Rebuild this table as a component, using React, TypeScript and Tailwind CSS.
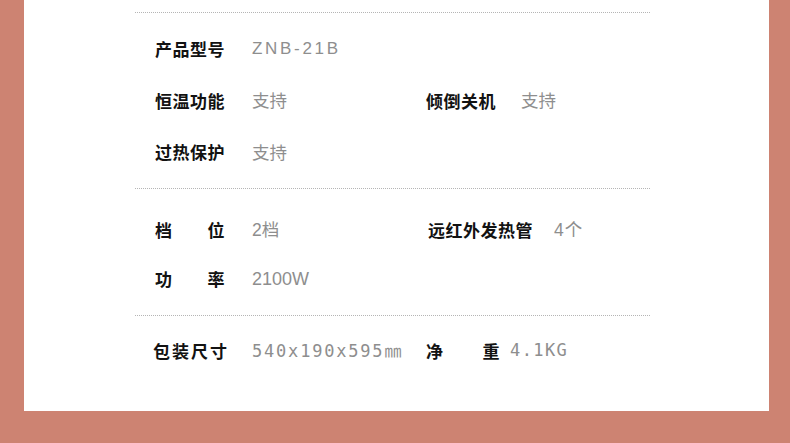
import React from "react";

const cjk = { fontFamily: '"Noto Sans CJK SC", "Noto Sans", sans-serif' };
const sans = { fontFamily: '"Liberation Sans", "Noto Sans CJK SC", sans-serif' };
const mono = { fontFamily: '"DejaVu Sans Mono", "Noto Sans CJK SC", monospace' };

function Label({ children, justify = false, w = "w-[70px]" }: { children: React.ReactNode; justify?: boolean; w?: string }) {
  return (
    <div
      className={`${w} shrink-0 text-[17px] font-bold text-[#121212] leading-none tracking-[0.5px] ${justify ? "flex justify-between" : ""}`}
      style={cjk}
    >
      {children}
    </div>
  );
}

function Line() {
  return <div className="h-0 border-t border-dotted border-[#b5b5b5]" />;
}

export default function App() {
  return (
    <div className="w-[790px] h-[443px] bg-[#cd8372] overflow-hidden">
      <div className="ml-[24px] w-[745px] h-[411px] bg-white pl-[111px]">
        <div className="w-[515px]">
          <div className="h-[12px]" />
          <Line />
          <div className="pt-[10px] pb-[11px] pl-[20px]">
            <div className="h-[51px] flex items-center">
              <div className="w-[271px] flex items-center">
                <Label w="w-[97px]">产品型号</Label>
                <span className="text-[17px] text-[#8e8e8e] tracking-[2.7px] leading-none" style={sans}>ZNB-21B</span>
              </div>
            </div>
            <div className="h-[52px] flex items-center">
              <div className="w-[271px] flex items-center">
                <Label w="w-[97px]">恒温功能</Label>
                <span className="text-[17.5px] text-[#8e8e8e] leading-none" style={cjk}>支持</span>
              </div>
              <div className="flex items-center">
                <Label w="w-[95px]">倾倒关机</Label>
                <span className="text-[17.5px] text-[#8e8e8e] leading-none" style={cjk}>支持</span>
              </div>
            </div>
            <div className="h-[51px] flex items-center">
              <div className="w-[271px] flex items-center">
                <Label w="w-[97px]">过热保护</Label>
                <span className="text-[17.5px] text-[#8e8e8e] leading-none" style={cjk}>支持</span>
              </div>
            </div>
          </div>
          <Line />
          <div className="pt-[16px] pb-[12px] pl-[20px]">
            <div className="h-[49px] flex items-center">
              <div className="w-[273px] flex items-center">
                <div className="w-[97px] shrink-0">
                  <Label justify>
                    <span>档</span>
                    <span>位</span>
                  </Label>
                </div>
                <span className="text-[17.5px] text-[#8e8e8e] leading-none" style={sans}>
                  2<span style={cjk}>档</span>
                </span>
              </div>
              <div className="flex items-center">
                <Label w="w-[126px]">远红外发热管</Label>
                <span className="text-[17.5px] text-[#8e8e8e] leading-none tracking-[1px]" style={sans}>
                  4<span style={cjk}>个</span>
                </span>
              </div>
            </div>
            <div className="h-[49px] flex items-center">
              <div className="w-[97px] shrink-0">
                <Label justify>
                  <span>功</span>
                  <span>率</span>
                </Label>
              </div>
              <span className="text-[18px] text-[#8e8e8e] leading-none" style={sans}>2100W</span>
            </div>
          </div>
          <Line />
          <div className="pt-[10px] pl-[18px]">
            <div className="h-[48px] flex items-center">
              <div className="w-[273px] flex items-center">
                <div className="w-[99px] shrink-0 text-[17px] font-bold text-[#121212] leading-none tracking-[2px]" style={cjk}>
                  包装尺寸
                </div>
                <span className="text-[17px] text-[#8e8e8e] leading-none tracking-[1.8px]" style={mono}>
                  540x190x595<span className="tracking-normal" style={cjk}>㎜</span>
                </span>
              </div>
              <div className="flex items-center">
                <div className="w-[84px] shrink-0">
                  <Label justify w="w-[74px]">
                    <span>净</span>
                    <span>重</span>
                  </Label>
                </div>
                <span className="text-[17px] text-[#8e8e8e] leading-none tracking-[1.4px]" style={mono}>4.1KG</span>
              </div>
            </div>
          </div>
        </div>
      </div>
    </div>
  );
}
